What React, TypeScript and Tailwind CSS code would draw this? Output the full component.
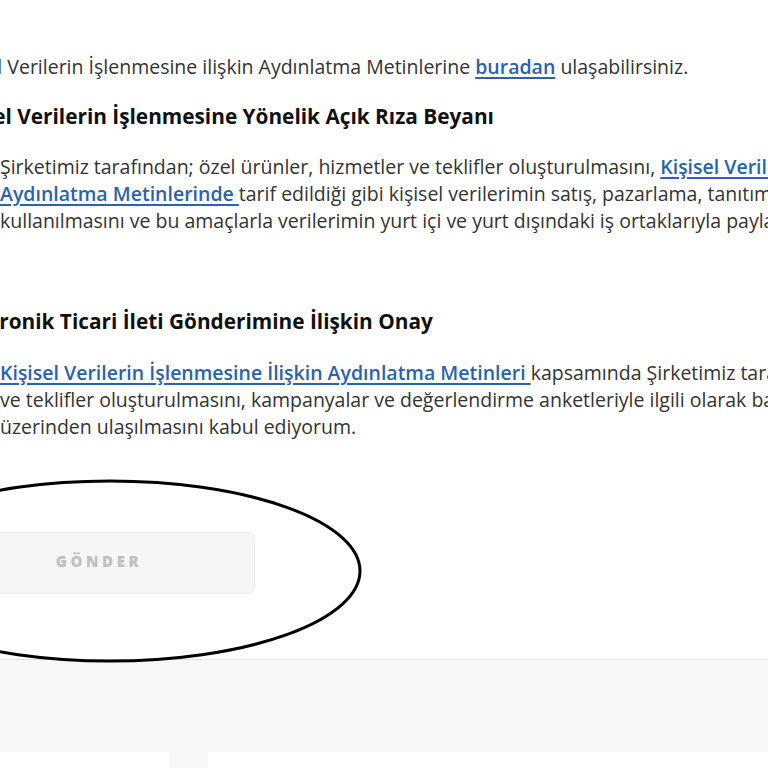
const font = { fontFamily: '"Open Sans", "Noto Sans", sans-serif' };

function Link({ children }: { children: React.ReactNode }) {
  return <a className="font-semibold text-[#2a62b0] underline underline-offset-[3px] decoration-[1.5px]">{children}</a>;
}

export default function App() {
  return (
    <div className="relative w-[768px] h-[768px] overflow-hidden bg-white" style={font}>
      <div className="pt-[53px] whitespace-nowrap">
        <p className="-ml-[54px] text-[19.5px] leading-[27px] text-[#333]">
          Kişisel Verilerin İşlenmesine ilişkin Aydınlatma Metinlerine <Link>buradan</Link> ulaşabilirsiniz.
        </p>

        <h2 className="-ml-[54px] mt-[21px] text-[20.8px] leading-[30px] font-bold text-[#111]">
          Kişisel Verilerin İşlenmesine Yönelik Açık Rıza Beyanı
        </h2>
        <div className="mt-[22px] text-[19.5px] leading-[27px] text-[#333]">
          <p>
            Şirketimiz tarafından; özel ürünler, hizmetler ve teklifler oluşturulmasını, <Link>Kişisel Verilerin İşlenmesine İlişkin</Link>
          </p>
          <p>
            <Link>Aydınlatma Metinlerinde </Link>tarif edildiği gibi kişisel verilerimin satış, pazarlama, tanıtım faaliyetlerinde
          </p>
          <p>kullanılmasını ve bu amaçlarla verilerimin yurt içi ve yurt dışındaki iş ortaklarıyla paylaşılmasına izin veriyorum.</p>
        </div>

        <h2 className="-ml-[53px] mt-[72px] text-[20.8px] leading-[30px] font-bold text-[#111]">
          Elektronik Ticari İleti Gönderimine İlişkin Onay
        </h2>
        <div className="mt-[23px] text-[19.5px] leading-[27px] text-[#333]">
          <p>
            <Link>Kişisel Verilerin İşlenmesine İlişkin Aydınlatma Metinleri </Link>kapsamında Şirketimiz tarafından özel ürünler, hizmetler
          </p>
          <p>ve teklifler oluşturulmasını, kampanyalar ve değerlendirme anketleriyle ilgili olarak bana elektronik ileti</p>
          <p>üzerinden ulaşılmasını kabul ediyorum.</p>
        </div>

        <button
          disabled
          className="-ml-[57px] mt-[92px] flex h-[62px] w-[312px] items-center justify-center rounded-[6px] border border-[#ececec] bg-[#f6f6f6] pb-[3px] text-[15px] font-extrabold tracking-[3.6px] text-[#c0c0c0]"
        >
          GÖNDER
        </button>
      </div>

      <div className="mt-[65px] h-[93px] border-t border-[#e2e2e2] bg-[#f7f7f7]" />
      <div className="ml-[170px] h-[20px] w-[38px] bg-[#f7f7f7]" />

      <svg className="pointer-events-none absolute left-0 top-0" width="768" height="768" viewBox="0 0 768 768">
        <ellipse cx="110" cy="571" rx="250" ry="90" fill="none" stroke="#000" strokeWidth="3" />
      </svg>
    </div>
  );
}
